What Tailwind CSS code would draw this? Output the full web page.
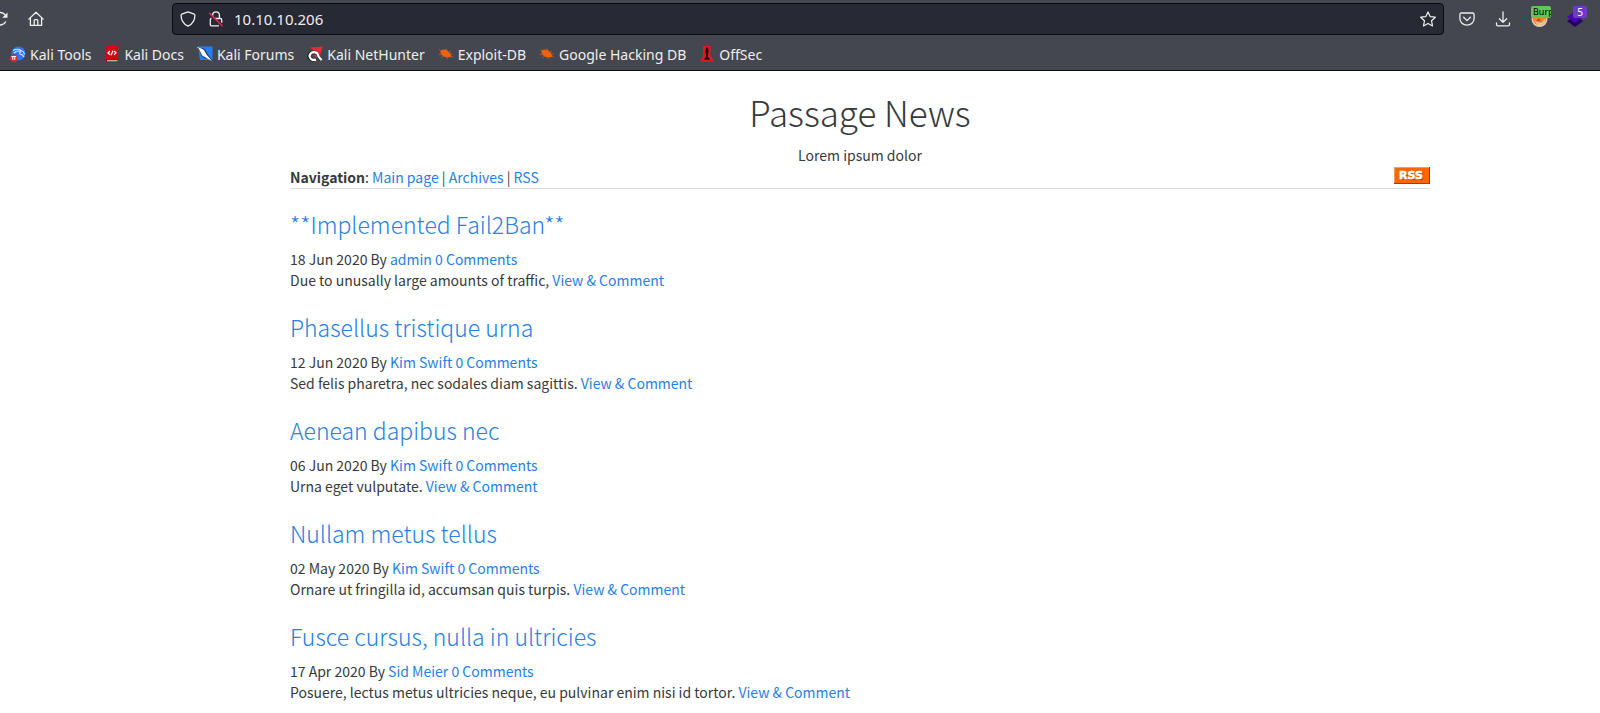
<!DOCTYPE html>
<html lang="en">
<head>
<meta charset="utf-8">
<title>Passage News</title>
<meta name="viewport" content="width=device-width, initial-scale=1">
<script src="https://cdn.jsdelivr.net/npm/@tailwindcss/browser@4"></script>
</head>
<body class="min-h-screen overflow-hidden bg-white font-['Noto_Sans_CJK_SC',sans-serif] text-[#373a3c]">
<header class="border-b border-[#0c0c0d] bg-[#44474f] font-['Noto_Sans',sans-serif] text-[14px] text-[#eeeeec]">
  <div class="flex h-[38px] items-center pr-[13px]">
    <div class="flex w-[172px] shrink-0 items-center">
      <button aria-label="Reload" class="-ml-2 mr-3"><svg class="block size-4" viewBox="0 0 16 16" fill="none" stroke="#eeeeec" stroke-width="1.5"><path d="M13.4 4.2A6.3 6.3 0 1 0 13.8 10.5"/><path d="M15.5 1.5v5.3h-5.3z" fill="#eeeeec" stroke="none"/></svg></button>
      <button aria-label="Home" class="ml-2"><svg class="block size-4" viewBox="0 0 16 16" fill="none" stroke="#eeeeec" stroke-width="1.3" stroke-linejoin="round" stroke-linecap="round"><path d="M.8 8.1 8 1.2l7.2 6.9M2.4 6.8v7.6h11.2V6.8M6.2 14.2V9.6c0-.6.3-.9.9-.9h1.8c.6 0 .9.3.9.9v4.6"/></svg></button>
    </div>
    <div class="flex h-8 grow items-center rounded border border-[#0c0c0d] bg-[#272935] px-[7px]">
      <svg class="size-4 shrink-0" viewBox="0 0 16 16" fill="none" stroke="#eeeeec" stroke-width="1.3" stroke-linejoin="round"><path d="M8 .9 14.2 3.2q.7.3.7 1C14.900 9 12.500 13 8 15.200 3.500 13 1.100 9 1.100 4.200q0-.7.7-1z"/></svg>
      <svg class="ml-3 size-4 shrink-0" viewBox="0 0 16 16" fill="none" stroke="#eeeeec" stroke-width="1.3"><path d="M4.600 5V4.300a3.400 3.400 0 0 1 6.800 0V7.500M7 7.500h5.500q1.200 0 1.200 1.200v3M11 14.800H3.500q-1.200 0-1.200-1.200V8.700q0-1.200 1.200-1.200"/><path d="m1.200 1.900 13.400 13.400" stroke="#e22850" stroke-width="1.5"/></svg>
      <input aria-label="Address" value="10.10.10.206" class="ml-[10px] min-w-0 grow bg-transparent text-[15px] outline-none">
      <button aria-label="Bookmark this page"><svg class="block size-4" viewBox="0 0 16 16" fill="none" stroke="#eeeeec" stroke-width="1.2" stroke-linejoin="round"><path d="m8 .9 2.100 4.700 5.200.6-3.800 3.500 1 5.200L8 12.400l-4.500 2.500 1-5.200L.7 6.200l5.200-.6z"/></svg></button>
    </div>
    <div class="flex shrink-0 items-center pl-[15px]">
      <button aria-label="Save to Pocket"><svg class="block size-4" viewBox="0 0 16 16" fill="none" stroke="#eeeeec" stroke-width="1.300" stroke-linejoin="round" stroke-linecap="round"><path d="M2.500 2h11q1.600 0 1.600 1.600V7.500a7.100 6.700 0 0 1-14.200 0V3.600Q.9 2 2.500 2zM4.600 6.300 8 9.600l3.400-3.300"/></svg></button>
      <button aria-label="Downloads" class="ml-5"><svg class="block size-4" viewBox="0 0 16 16" fill="none" stroke="#eeeeec" stroke-width="1.300" stroke-linejoin="round" stroke-linecap="round"><path d="M8 .8v10.400M4.300 7.700 8 11.300l3.700-3.600M1.500 12v1.500q0 1.300 1.300 1.300h10.400q1.300 0 1.300-1.300V12"/></svg></button>
      <button aria-label="FoxyProxy: Burp" class="relative ml-5"><svg class="block h-[18px] w-5" viewBox="0 0 20 18"><circle cx="8.500" cy="9" r="8" fill="#d8cdbb"/><circle cx="8.500" cy="8.500" r="6.600" fill="#ef8424"/><path d="M3 9.500q3 4 8 3l3-4v4q-4 4-8 2z" fill="#f8c27f"/><path d="m5 11 3-3 2 3z" fill="#b95317"/></svg>
        <span class="absolute -top-1 left-0 h-3 w-5 overflow-hidden rounded-xs bg-[#60c65c] pl-[2px] text-left text-[9px] leading-3 text-black">Burp</span></button>
      <button aria-label="Wappalyzer: 5" class="relative ml-4"><svg class="block h-[18px] w-5" viewBox="0 0 20 18"><path d="m0 11 8-5 8 5-8 6z" fill="#220068"/><path d="m0 7 8-6 8 6-8 6z" fill="#4608ad"/></svg>
        <span class="absolute -top-1 left-[6px] h-3 w-[14px] rounded-xs bg-[#6d3cc0] text-center text-[10px] leading-3 text-white">5</span></button>
    </div>
  </div>
  <nav aria-label="Bookmarks" class="flex h-8 items-center gap-[13px] whitespace-nowrap pl-[10px]">
    <a href="#" class="flex items-center gap-1"><svg class="size-4" viewBox="0 0 16 16"><circle cx="8.500" cy="7.500" r="7" fill="#2777f5"/><path d="M3 4.500q5-2.500 8 0 3 1 3.500 4M4 7q3-3 7-1.500M11 5.500q-2 1-1 2.500 3 .5 4 3" fill="none" stroke="#d9ebff" stroke-width="1.100"/><circle cx="3.800" cy="12" r="3.800" fill="#dd2932"/><path d="M1.500 10.500h4.600M2.800 10.500v3.300M4.800 10.500v3.300" stroke="#fff"/></svg>Kali Tools</a>
    <a href="#" class="flex items-center gap-1"><svg class="size-4" viewBox="0 0 16 16"><path d="M2 0h12v16H2z" fill="#d3090f"/><path d="M2 13.500h12V16H2z" fill="#8f070b"/><path d="M3 14.800h10.500" stroke="#eee"/><path d="m6 5-2 2 2 1.800M10 5l2 1.800-2 2M9 4.800 7 9.200" fill="none" stroke="#fff" stroke-width="1.200"/></svg>Kali Docs</a>
    <a href="#" class="flex items-center gap-1"><svg class="size-4" viewBox="0 0 16 16"><path d="M1 .5h14.500V14H3z" fill="#2280f3"/><path d="M0 1 6.500 3.500 9.500 8.500 15.500 15.500 9 11.500 4.500 9.500z" fill="#fff"/><path d="m5 2 3 2 2 4 5.500 7M1 2l4 8 4 2.500" fill="none" stroke="#252a36" stroke-width=".9"/></svg>Kali Forums</a>
    <a href="#" class="flex items-center gap-1"><svg class="size-4" viewBox="0 0 16 16"><path d="m3 1.500 12.500-1L12.500 12z" fill="#ed2834"/><path d="M7 14Q1.500 13.500 2 9.500q2-4 6-3 3 1 3 4l3 3" fill="none" stroke="#21232b" stroke-width="3.600"/><path d="M9 13.800Q3 14.500 2.500 10q1-4 5-3.800 3.500.5 4 4.300l3 3.500" fill="none" stroke="#fff" stroke-width="2.200"/><path d="m6 10 2.500-.5 1.200 1.800" fill="none" stroke="#ed2834" stroke-width="1.200"/></svg>Kali NetHunter</a>
    <a href="#" class="flex items-center gap-1"><svg class="size-4" viewBox="0 0 16 16"><path d="M2.500 4.500q4-2 7.500.5 3 2 3.500 5.500-5 2-8.500-.5Q2 8 2.500 4.500z" fill="#f0610c"/><path d="m1 3.500 3 2M8 2.500l1 2.500M13 5l-2.500 1.500M.5 8.500l4-.5M3 12l3-2M9 13l.5-2.500M12 8h3M13 10l2.500 1.500" stroke="#b9602f" stroke-width=".8"/></svg>Exploit-DB</a>
    <a href="#" class="flex items-center gap-1"><svg class="size-4" viewBox="0 0 16 16"><path d="M2.500 4.500q4-2 7.500.5 3 2 3.500 5.500-5 2-8.500-.5Q2 8 2.500 4.500z" fill="#f0610c"/><path d="m1 3.500 3 2M8 2.500l1 2.500M13 5l-2.500 1.500M.5 8.500l4-.5M3 12l3-2M9 13l.5-2.500M12 8h3M13 10l2.500 1.500" stroke="#b9602f" stroke-width=".8"/></svg>Google Hacking DB</a>
    <a href="#" class="flex items-center gap-1"><svg class="size-4" viewBox="0 0 16 16"><path d="M4 0h7.500v9l3.500 6.500H1L4 9z" fill="#e01820"/><path d="M7.200 1.500h1.600l.9 3.500-.8 3.500.5 3q1.600 1 1.400 2.300H5.200q-.2-1.300 1.400-2.300l.5-3L6.300 5z" fill="#27090c"/></svg>OffSec</a>
  </nav>
</header>
<div class="pl-[120px]">
<main class="mx-auto max-w-[1140px] text-[14px] leading-[21px]">
  <header class="pt-[21px] text-center">
    <h1 class="text-[35px] font-light leading-10">Passage News</h1>
    <p class="mt-[13px]">Lorem ipsum dolor</p>
  </header>
  <nav aria-label="Site" class="mt-px flex items-start justify-between border-b border-[#d9d9d9]">
    <p><b>Navigation</b>: <a href="#" class="text-[#2780e3]">Main page</a> | <a href="#" class="text-[#2780e3]">Archives</a> | <a href="#" class="text-[#2780e3]">RSS</a></p>
    <a href="#" aria-label="RSS feed"><svg class="block h-[17px] w-9" viewBox="0 0 36 17"><path d="M0 0h36v17H0z" fill="#a33c00"/><path d="M0 0h35v16H0z" fill="#ff9a55"/><path d="M1 1h34v15H1z" fill="#ff6600"/><text x="6" y="13" font-family="DejaVu Sans" font-weight="bold" font-size="11" fill="#a33c00">RSS</text><text x="5" y="12" font-family="DejaVu Sans" font-weight="bold" font-size="11" fill="#fff" stroke="#fff" stroke-width=".6">RSS</text></svg></a>
  </nav>
  <article class="pt-5">
    <h2 class="mb-[10px] text-[23px] font-light leading-[30px] text-[#2780e3]"><a href="#">**Implemented Fail2Ban**</a></h2>
    <p>18 Jun 2020 By <a href="#" class="text-[#2780e3]">admin</a> <a href="#" class="text-[#2780e3]">0 Comments</a></p>
    <p>Due to unusally large amounts of traffic, <a href="#" class="text-[#2780e3]">View &amp; Comment</a></p>
  </article>
  <article class="pt-[21px]">
    <h2 class="mb-[10px] text-[23px] font-light leading-[30px] text-[#2780e3]"><a href="#">Phasellus tristique urna</a></h2>
    <p>12 Jun 2020 By <a href="#" class="text-[#2780e3]">Kim Swift</a> <a href="#" class="text-[#2780e3]">0 Comments</a></p>
    <p>Sed felis pharetra, nec sodales diam sagittis. <a href="#" class="text-[#2780e3]">View &amp; Comment</a></p>
  </article>
  <article class="pt-[21px]">
    <h2 class="mb-[10px] text-[23px] font-light leading-[30px] text-[#2780e3]"><a href="#">Aenean dapibus nec</a></h2>
    <p>06 Jun 2020 By <a href="#" class="text-[#2780e3]">Kim Swift</a> <a href="#" class="text-[#2780e3]">0 Comments</a></p>
    <p>Urna eget vulputate. <a href="#" class="text-[#2780e3]">View &amp; Comment</a></p>
  </article>
  <article class="pt-[21px]">
    <h2 class="mb-[10px] text-[23px] font-light leading-[30px] text-[#2780e3]"><a href="#">Nullam metus tellus</a></h2>
    <p>02 May 2020 By <a href="#" class="text-[#2780e3]">Kim Swift</a> <a href="#" class="text-[#2780e3]">0 Comments</a></p>
    <p>Ornare ut fringilla id, accumsan quis turpis. <a href="#" class="text-[#2780e3]">View &amp; Comment</a></p>
  </article>
  <article class="pt-[21px]">
    <h2 class="mb-[10px] text-[23px] font-light leading-[30px] text-[#2780e3]"><a href="#">Fusce cursus, nulla in ultricies</a></h2>
    <p>17 Apr 2020 By <a href="#" class="text-[#2780e3]">Sid Meier</a> <a href="#" class="text-[#2780e3]">0 Comments</a></p>
    <p>Posuere, lectus metus ultricies neque, eu pulvinar enim nisi id tortor. <a href="#" class="text-[#2780e3]">View &amp; Comment</a></p>
  </article>
</main>
</div>
</body>
</html>
